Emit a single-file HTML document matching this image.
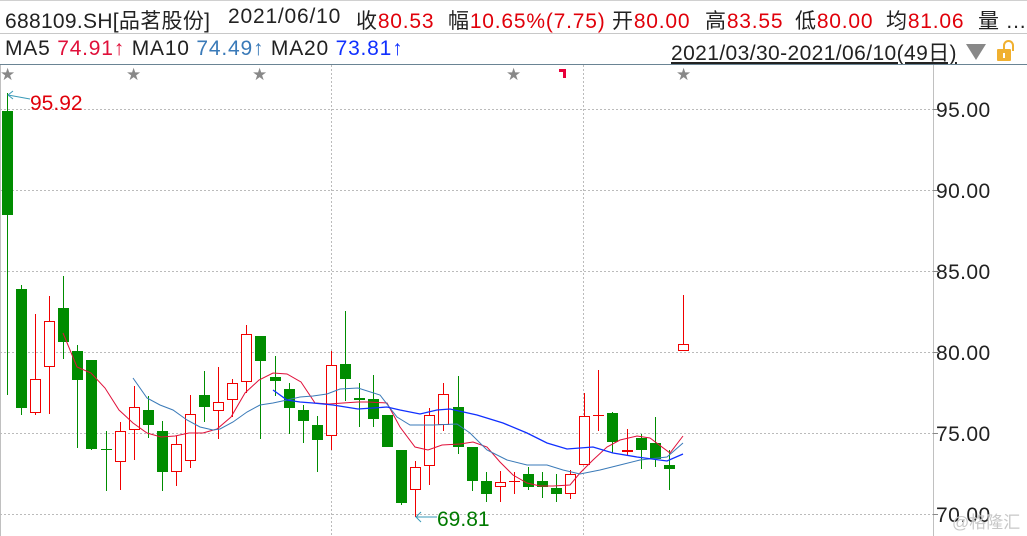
<!DOCTYPE html>
<html><head><meta charset="utf-8">
<style>
*{margin:0;padding:0;box-sizing:border-box}
body{width:1027px;height:536px;overflow:hidden;background:#fff;font-family:"Liberation Sans","Noto Sans CJK SC",sans-serif;position:relative;color:#222}
.row{position:absolute;left:0;width:1027px;font-size:21px;letter-spacing:.8px;white-space:nowrap}
.r{color:#e0000a}
.t{position:absolute;top:5px}
</style></head><body>
<div style="position:absolute;left:0;top:0;width:1027px;height:1px;background:#d0d0d0"></div>
<div class="row" style="top:0;height:33px">
<span class="t" style="left:5px;letter-spacing:.3px">688109.SH[品茗股份]</span>
<span class="t" style="left:228px">2021/06/10</span>
<span class="t" style="left:356px">收<span class="r">80.53</span></span>
<span class="t" style="left:448px">幅<span class="r">10.65%(7.75)</span></span>
<span class="t" style="left:612px">开<span class="r">80.00</span></span>
<span class="t" style="left:705px">高<span class="r">83.55</span></span>
<span class="t" style="left:795px">低<span class="r">80.00</span></span>
<span class="t" style="left:886px">均<span class="r">81.06</span></span>
<span class="t" style="left:978px">量 ...</span>
</div>
<div style="position:absolute;left:0;top:33px;width:1027px;height:1px;background:#c8c8c8"></div>
<div class="row" style="top:34px;height:30px">
<span class="t" style="left:5px;top:3px">MA5 <span style="color:#e0103a">74.91↑</span> MA10 <span style="color:#3a7ab8">74.49↑</span> MA20 <span style="color:#1030ff">73.81↑</span></span>
<span class="t" style="left:671px;top:3px;text-decoration:underline;letter-spacing:.4px">2021/03/30-2021/06/10(49日)</span>
<div style="position:absolute;left:966px;top:10px;width:0;height:0;border-left:10px solid transparent;border-right:10px solid transparent;border-top:16px solid #888"></div>
<div style="position:absolute;left:997px;top:15px;width:14px;height:12px;background:#f0b030;border-radius:1px"></div>
<div style="position:absolute;left:1003px;top:6px;width:11px;height:11px;border:2px solid #f0b030;border-bottom:none;border-radius:6px 6px 0 0"></div>
<div style="position:absolute;left:1003px;top:19px;width:2px;height:5px;background:#fff"></div>
</div>
<div style="position:absolute;left:0;top:64px;width:1027px;height:1px;background:#6a8494"></div>
<svg id="c" width="1027" height="471" style="position:absolute;left:0;top:65px" viewBox="0 65 1027 471" xmlns="http://www.w3.org/2000/svg" font-family="Liberation Sans, sans-serif">
<line x1="0.5" y1="65" x2="0.5" y2="536" stroke="#c0c0c0"/>
<line x1="933.5" y1="65" x2="933.5" y2="536" stroke="#c0c0c0"/>
<g stroke="#bbb" stroke-dasharray="2,2">
<line x1="0" y1="109.5" x2="933" y2="109.5"/><line x1="0" y1="190.5" x2="933" y2="190.5"/>
<line x1="0" y1="271.5" x2="933" y2="271.5"/><line x1="0" y1="352.5" x2="933" y2="352.5"/>
<line x1="0" y1="433.5" x2="933" y2="433.5"/><line x1="0" y1="514.5" x2="933" y2="514.5"/>
<line x1="331.5" y1="65" x2="331.5" y2="536"/><line x1="583.5" y1="65" x2="583.5" y2="536"/>
</g>
<g stroke="#888"><line x1="933" y1="109.5" x2="938" y2="109.5"/><line x1="933" y1="190.5" x2="938" y2="190.5"/><line x1="933" y1="271.5" x2="938" y2="271.5"/><line x1="933" y1="352.5" x2="938" y2="352.5"/><line x1="933" y1="433.5" x2="938" y2="433.5"/><line x1="933" y1="514.5" x2="938" y2="514.5"/></g>
<g font-size="21" fill="#222" letter-spacing=".4">
<text x="936" y="117">95.00</text><text x="936" y="198">90.00</text><text x="936" y="279">85.00</text>
<text x="936" y="360">80.00</text><text x="936" y="441">75.00</text><text x="936" y="522">70.00</text>
</g>
<text x="952" y="528" font-size="17" fill="#c8c8c8" font-family="Liberation Sans, Noto Sans CJK SC, sans-serif">@格隆汇</text>
<g fill="#888" font-size="17"><text x="0" y="80">★</text><text x="126" y="80">★</text><text x="252" y="80">★</text><text x="506" y="80">★</text><text x="676" y="80">★</text></g>
<path d="M559 69h7v9h-3v-6h-4z" fill="#e8003a"/>
<g id="k"></g>
<polyline fill="none" stroke="#e0103a" stroke-width="1" points="63,333 77,367 91,373 105,388 119,410 133,423 147,433 161,437 175,436 189,433 203,433 217,429 231,417 245,393 259,380 273,373 287,374 301,382 315,403 329,404 343,403 358,402 368,402 387,403 400,427 415,447 428,450 442,445 460,444 473,442 487,447 500,462 513,475 527,483 540,486 553,486 570,485 580,473 593,460 607,447 620,440 637,436 650,438 670,453 683,436"/>
<polyline fill="none" stroke="#3a7ab8" stroke-width="1" points="133,378 147,398 160,405 173,410 187,420 200,427 213,430 220,429 233,422 247,412 260,405 273,403 287,400 300,397 313,396 327,394 340,389 358,388 380,395 397,417 410,425 433,425 457,424 470,433 487,450 507,460 527,465 547,465 563,470 580,474 600,470 620,465 640,460 667,457 683,443"/>
<polyline fill="none" stroke="#1030ff" stroke-width="1.3" points="273,390 287,400 300,402 313,403 333,405 358,409 387,407 400,410 420,414 437,410 450,409 477,415 503,423 527,433 547,443 567,449 593,447 613,453 637,457 667,461 683,454"/>
<polyline fill="none" stroke="#3a9ab8" points="30,99 8,95"/><polyline fill="none" stroke="#3a9ab8" points="13,91 8,95 13,99"/>
<text x="30" y="110" font-size="21" fill="#e0000a">95.92</text>
<polyline fill="none" stroke="#3a9ab8" points="437,517 416,517"/><polyline fill="none" stroke="#3a9ab8" points="421,512 416,517 421,522"/>
<text x="437" y="526" font-size="21" fill="#007a00">69.81</text>
</svg>
<script>
var d=[
['g',111,215,93,395],['g',289,408,285,415],['r',379,413,314,415],['r',321,367,296,414],['g',308,342,276,359],
['g',351,380,345,448],['g',360,449,360,450],['g',449,450,431,491],['r',431,462,422,490],['r',407,430,386,460],
['g',410,425,396,438],['g',431,472,421,491],['r',444,472,436,486],['r',414,461,395,468],['g',395,407,371,422],
['r',402,411,367,439],['r',383,400,379,417],['r',334,382,325,393],['g',336,361,336,439],['g',377,381,356,396],
['g',389,408,383,434],['g',410,421,405,443],['g',425,440,416,472],['r',365,436,351,450],['g',364,379,311,401],
['g',398,400,383,427],['g',399,419,375,427],['g',415,447,415,447],['g',450,503,450,505],['r',467,490,461,517],
['r',415,466,408,485],['r',394,425,383,431],['g',407,447,376,454],['g',447,481,447,491],['g',481,494,472,502],
['r',482,487,471,502],['r',481,481,472,494],['g',474,487,467,490],['g',481,487,472,498],['g',488,494,474,502],
['r',474,494,470,499],['r',416,465,393,465],['r',415,415,370,431],['g',413,442,412,453],['r',450,452,429,455],
['g',438,450,434,469],['g',443,459,417,467],['g',465,469,450,490],['r',344,351,295,351]];
var s='';
d.forEach(function(c,i){
 var x=Math.round(7+i*14.08);if(i==48)x=683;
 var col=c[0]=='g'?'#008c00':'#f00000';
 s+='<line x1="'+(x+.5)+'" y1="'+c[3]+'" x2="'+(x+.5)+'" y2="'+c[4]+'" stroke="'+col+'"/>';
 var h=Math.max(c[2]-c[1],1);
 if(c[0]=='g') s+='<rect x="'+(x-5)+'" y="'+c[1]+'" width="11" height="'+h+'" fill="'+col+'"/>';
 else if(h<=2) s+='<rect x="'+(x-5)+'" y="'+c[1]+'" width="11" height="'+h+'" fill="'+col+'"/>';
 else s+='<rect x="'+(x-4.5)+'" y="'+(c[1]+.5)+'" width="10" height="'+(h-1)+'" fill="#fff" stroke="'+col+'"/>';
});
document.getElementById('k').innerHTML=s;
</script>
</body></html>
